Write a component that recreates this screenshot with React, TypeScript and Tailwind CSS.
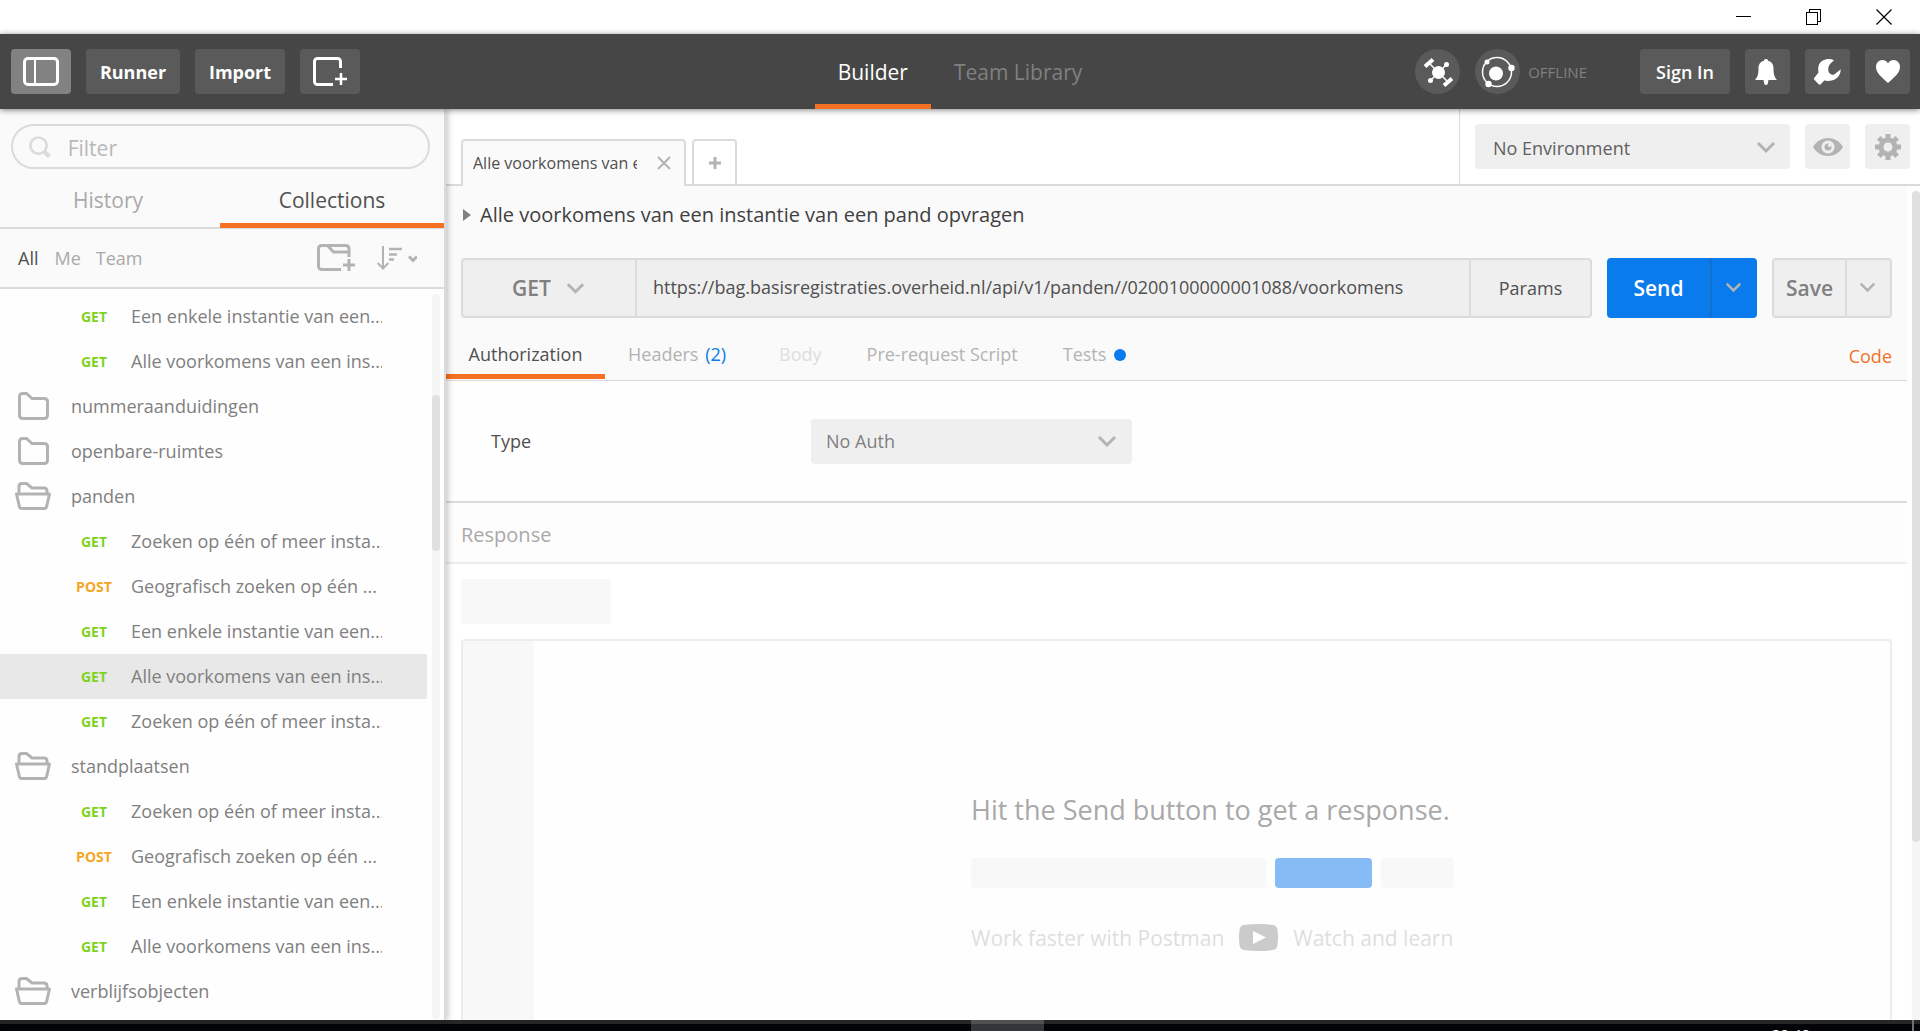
import React from 'react';

type Row =
  | { kind: 'folder'; name: string; open: boolean }
  | { kind: 'request'; method: 'GET' | 'POST'; name: string; active?: boolean };

const rows: Row[] = [
  { kind: 'request', method: 'GET', name: 'Een enkele instantie van een...' },
  { kind: 'request', method: 'GET', name: 'Alle voorkomens van een ins...' },
  { kind: 'folder', name: 'nummeraanduidingen', open: false },
  { kind: 'folder', name: 'openbare-ruimtes', open: false },
  { kind: 'folder', name: 'panden', open: true },
  { kind: 'request', method: 'GET', name: 'Zoeken op één of meer insta...' },
  { kind: 'request', method: 'POST', name: 'Geografisch zoeken op één ...' },
  { kind: 'request', method: 'GET', name: 'Een enkele instantie van een...' },
  { kind: 'request', method: 'GET', name: 'Alle voorkomens van een ins...', active: true },
  { kind: 'request', method: 'GET', name: 'Zoeken op één of meer insta...' },
  { kind: 'folder', name: 'standplaatsen', open: true },
  { kind: 'request', method: 'GET', name: 'Zoeken op één of meer insta...' },
  { kind: 'request', method: 'POST', name: 'Geografisch zoeken op één ...' },
  { kind: 'request', method: 'GET', name: 'Een enkele instantie van een...' },
  { kind: 'request', method: 'GET', name: 'Alle voorkomens van een ins...' },
  { kind: 'folder', name: 'verblijfsobjecten', open: true },
];

function Chevron({ className }: { className: string }) {
  return (
    <svg viewBox="0 0 20 14" fill="none" stroke="currentColor" strokeWidth="3" className={className}>
      <path d="M2 3l8 8 8-8" />
    </svg>
  );
}

function TitleBar() {
  return (
    <div className="flex h-[34px] shrink-0 items-center justify-end gap-[54px] bg-white pr-[28px] text-black">
      <button aria-label="Minimize" className="h-4 w-4">
        <svg viewBox="0 0 16 16" className="h-4 w-4" shapeRendering="crispEdges">
          <path d="M0 7.5h15" stroke="currentColor" />
        </svg>
      </button>
      <button aria-label="Restore" className="h-4 w-4">
        <svg viewBox="0 0 16 16" className="h-4 w-4" fill="none" stroke="currentColor" shapeRendering="crispEdges">
          <path d="M.5 3.5h11v12H.5zM3.500 3.500v-3h11v12h-3" />
        </svg>
      </button>
      <button aria-label="Close" className="h-4 w-4">
        <svg viewBox="0 0 16 16" className="h-4 w-4" stroke="currentColor" strokeWidth="1.2">
          <path d="M.5.5l15 15M15.500.5l-15 15" />
        </svg>
      </button>
    </div>
  );
}

function Header() {
  const btn = 'flex h-[45px] items-center justify-center rounded bg-[#5a5a5a] text-white';
  return (
    <header className="relative z-20 grid h-[75px] shrink-0 grid-cols-[1fr_auto_1fr] bg-[#464646] shadow-[0_1px_6px_rgba(0,0,0,0.5)]">
      <div className="flex items-center gap-[15px] pl-[11px]">
        <button aria-label="Toggle sidebar" className="flex h-[45px] w-[60px] items-center justify-center rounded bg-[#828282] text-white">
          <svg viewBox="0 0 36 29" className="h-[29px] w-[36px]" fill="none" stroke="currentColor">
            <rect x="1.500" y="1.500" width="33" height="26" rx="3.500" strokeWidth="3" />
            <path d="M12 2v25" strokeWidth="2" />
          </svg>
        </button>
        <button className={`${btn} w-[94px] pt-[2px] text-[18px] font-bold`}>Runner</button>
        <button className={`${btn} w-[90px] pt-[2px] text-[18px] font-bold`}>Import</button>
        <button aria-label="New window" className={`${btn} w-[60px]`}>
          <svg viewBox="0 0 34 29" className="h-[29px] w-[34px]" fill="none" stroke="currentColor" strokeWidth="3">
            <path d="M20 27.500H4.500a3 3 0 0 1-3-3v-20a3 3 0 0 1 3-3h20a3 3 0 0 1 3 3V11" />
            <path d="M28 16v12M22 22h12" strokeWidth="2.500" />
          </svg>
        </button>
      </div>
      <nav className="flex text-[21px]">
        <button className="border-b-[5px] border-[#f47023] px-[23px] pt-[7px] font-medium text-white">Builder</button>
        <button className="px-[23px] pt-[2px] text-[#808080]">Team Library</button>
      </nav>
      <div className="flex items-center justify-end gap-[15px] pr-[10px]">
        <button aria-label="Interceptor" className="flex h-[45px] w-[45px] items-center justify-center rounded-full bg-[#5a5a5a] text-white">
          <svg viewBox="0 0 30 30" className="h-[30px] w-[30px]" fill="currentColor" stroke="currentColor">
            <circle cx="15.500" cy="15.500" r="6" />
            <path d="M6 6l19 19M24 7L7 24" strokeWidth="1.500" />
            <circle cx="23.500" cy="7.500" r="2.500" stroke="none" />
            <circle cx="7.500" cy="23.500" r="2.500" stroke="none" />
            <path d="M2 9.500l8-7M21 28.500l8-7" strokeWidth="4" />
          </svg>
        </button>
        <button aria-label="Sync status" className="flex h-[45px] items-center gap-2 text-[15px] text-[#808080]">
          <span className="flex h-[45px] w-[45px] items-center justify-center rounded-full bg-[#5a5a5a] text-white">
            <svg viewBox="0 0 34 34" className="h-[34px] w-[34px]" fill="currentColor">
              <circle cx="16" cy="17" r="14.500" fill="none" stroke="currentColor" strokeWidth="1.500" />
              <circle cx="15" cy="18.500" r="7" />
              <circle cx="6" cy="7" r="2.500" />
              <circle cx="30.500" cy="13" r="3.200" />
              <circle cx="7.500" cy="29" r="3.200" />
            </svg>
          </span>
          <span className="pt-[2px]">OFFLINE</span>
        </button>
        <button className={`${btn} ml-[38px] w-[90px] pt-[2px] text-[18px] font-semibold`}>Sign In</button>
        <button aria-label="Notifications" className={`${btn} w-[45px]`}>
          <svg viewBox="0 0 26 26" className="h-[26px] w-[26px]" fill="currentColor">
            <path d="M11 0c1.500 0 2 .8 2 1.800 4 1 5.500 4 5.500 7.700 0 6 1 8.500 3.500 11.500H13.500l-.8 4a2 2 0 0 1-3.400 0l-.8-4H0c2.500-3 3.500-5.500 3.500-11.500C3.500 5.800 5 2.800 9 1.800 9 .8 9.500 0 11 0z" />
          </svg>
        </button>
        <button aria-label="Settings" className={`${btn} w-[45px]`}>
          <svg viewBox="0 0 27 26" className="h-[26px] w-[27px]" fill="currentColor">
            <path d="M20 1.200C14-1.500 6.500 1 4.700 6.500c-.8 2.500-.5 4.500-.2 7L.6 18.500c-1 1-.6 2 0 2.500l4 4.300c.7.7 1.500.6 2.200 0l3.400-3.800c7 1.600 16-.8 16.600-11.300l-6.600 5.300c-3 1-6-1.500-6-5.300 0-3.500 2-6 5.800-9z" />
          </svg>
        </button>
        <button aria-label="Favorites" className={`${btn} w-[45px]`}>
          <svg viewBox="0 0 24 23" className="h-[23px] w-[24px]" fill="currentColor">
            <path d="M12 23C6 17.500 0 13 0 7 0 3 2.800 0 6.500 0 9 0 11 1.200 12 3.500 13 1.200 15 0 17.500 0 21.200 0 24 3 24 7c0 6-6 10.500-12 16z" />
          </svg>
        </button>
      </div>
    </header>
  );
}

function FolderIcon({ open }: { open: boolean }) {
  return open ? (
    <svg viewBox="0 0 36 28" className="mb-px ml-[15px] h-[28px] w-[36px]" fill="none" stroke="#b3b3b3" strokeWidth="3">
      <path d="M4 12V4.500C4 2.500 5 1.500 7 1.500h4.500L17 6h12c2 0 3 1 3 3v3" />
      <path d="M1.500 12h33l-3 13c-.3 1-.8 1.500-2 1.500h-23c-1.200 0-1.700-.5-2-1.500z" strokeLinejoin="round" />
    </svg>
  ) : (
    <svg viewBox="1 0 36 28" className="mb-px ml-[15px] h-[28px] w-[36px]" fill="none" stroke="#b3b3b3" strokeWidth="3">
      <path d="M5.500 5c0-2.300 1-3.500 3.500-3.500h3.500L18 6.500h12c2.200 0 3.500 1 3.500 3V23c0 2.200-1 3.500-3.500 3.500H9c-2.300 0-3.500-1-3.500-3.500z" />
    </svg>
  );
}

function Sidebar() {
  return (
    <aside className="relative z-10 flex w-[446px] shrink-0 flex-col border-r-2 border-[#dbdbdb] bg-[#fafafa] shadow-[2px_0_6px_rgba(0,0,0,0.22)]">
      <div className="pl-[11px] pr-[14px] pt-[15px]">
        <label className="flex h-[45px] items-center rounded-full border-2 border-[#dbdbdb] pl-[16px]">
          <svg viewBox="0 0 24 24" className="h-6 w-6" fill="none" stroke="#dbdbdb">
            <circle cx="10.500" cy="10.500" r="9" strokeWidth="3" />
            <path d="M17 17l5.500 5.500" strokeWidth="4.500" />
          </svg>
          <input aria-label="Filter" placeholder="Filter" className="ml-[17px] w-full bg-transparent pt-1 text-[21px] outline-none placeholder:text-[#b8b8b8]" />
        </label>
      </div>
      <div className="flex h-[60px] border-b-2 border-[#dbdbdb] text-[21px]">
        <button className="w-[220px] pr-1 pt-[6px] text-[#a9a9a9]">History</button>
        <button className="-mb-px flex-1 border-b-[5px] border-[#f47023] pt-[10px] text-[#505050]">Collections</button>
      </div>
      <div className="flex h-[60px] shrink-0 items-center border-b-2 border-[#dbdbdb] pl-[18px] text-[18px] text-[#a9a9a9]">
        <button className="text-[#505050]">All</button>
        <button className="ml-4">Me</button>
        <button className="ml-[15px]">Team</button>
        <button aria-label="New folder" className="mb-px ml-auto">
          <svg viewBox="0 0 38 27" className="h-[27px] w-[38px]" fill="none" stroke="#b3b3b3" strokeWidth="3">
            <path d="M24 25.500H5c-2.300 0-3.500-1-3.500-3.500V5c0-2.300 1-3.500 3.500-3.500h23.500c2.300 0 3.500 1 3.500 3.500v8" />
            <path d="M11 2l5.500 6H32" />
            <path d="M32 15v12M26 21h12" />
          </svg>
        </button>
        <button aria-label="Sort" className="ml-[22px] mr-[27px]">
          <svg viewBox="0 0 40 24" className="h-[24px] w-[40px]" fill="none" stroke="#b3b3b3" strokeWidth="2">
            <path d="M6 0v22M.7 17L6 22.500 11.300 17" />
            <path d="M12 3h13M12 8.500h8M12 13.500h5" strokeWidth="2.500" />
            <path d="M32 10.500l4 4 4-4" strokeWidth="3" />
          </svg>
        </button>
      </div>
      <div className="flex min-h-0 flex-1 overflow-hidden bg-[#fefefe] pt-[5px]">
        <ul className="w-[427px] text-[18px] text-[#808080]">
          {rows.map((row, i) => (
            <li key={i}>
              {row.kind === 'folder' ? (
                <button className="flex h-[45px] w-full items-center text-left">
                  <FolderIcon open={row.open} />
                  <span className="ml-[20px]">{row.name}</span>
                </button>
              ) : (
                <button className={row.active ? 'flex h-[45px] w-full items-center bg-[#e8e8e8] text-left' : 'flex h-[45px] w-full items-center text-left'}>
                  <span className={row.method === 'GET' ? 'ml-[64px] w-[60px] pb-px text-center text-[14px] font-bold text-[#7ed321]' : 'ml-[64px] w-[60px] pb-px text-center text-[14px] font-bold text-[#f5a623]'}>
                    {row.method}
                  </span>
                  <span className="ml-[7px] w-[251px] overflow-hidden whitespace-nowrap">{row.name}</span>
                </button>
              )}
            </li>
          ))}
        </ul>
        <div className="mb-px ml-[5px] w-2 rounded-full bg-[#f5f5f5] pt-[101px]">
          <div className="h-[156px] rounded-full bg-[#e0e0e0]" />
        </div>
      </div>
    </aside>
  );
}

function TopStrip() {
  return (
    <div className="flex h-[77px] shrink-0 border-b-2 border-[#dbdbdb] bg-white">
      <div className="-mb-[2px] flex flex-1 items-end gap-[6px] pl-[15px]">
        <div className="flex h-[47px] w-[225px] items-center rounded-t border-2 border-b-0 border-[#dbdbdb] bg-[#fafafa] pb-[2px] pl-[10px] text-[16px] text-[#505050]">
          <button className="w-[164px] overflow-hidden whitespace-nowrap text-left">Alle voorkomens van een instantie</button>
          <button aria-label="Close tab" className="ml-5 text-[#b3b3b3]">
            <svg viewBox="0 0 14 14" className="h-[14px] w-[14px]" stroke="currentColor" strokeWidth="2">
              <path d="M1 1l12 12M13 1L1 13" />
            </svg>
          </button>
        </div>
        <button aria-label="New tab" className="flex h-[47px] w-[45px] items-center justify-center rounded-t border-2 border-[#dbdbdb] text-[#b3b3b3]">
          <svg viewBox="0 0 12 12" className="h-3 w-3" stroke="currentColor" strokeWidth="3">
            <path d="M6 0v12M0 6h12" />
          </svg>
        </button>
      </div>
      <div className="flex items-start gap-[15px] border-l border-[#dbdbdb] pl-[15px] pr-[10px] pt-[15px]">
        <div className="relative">
          <select aria-label="Environment" className="h-[45px] w-[315px] appearance-none rounded bg-[#efefef] pl-[18px] pt-1 text-[18px] text-[#606060]">
            <option>No Environment</option>
          </select>
          <Chevron className="pointer-events-none absolute right-[14px] top-4 h-[14px] w-[20px] text-[#b3b3b3]" />
        </div>
        <button aria-label="Quick look" className="flex h-[45px] w-[45px] items-center justify-center rounded bg-[#efefef]">
          <svg viewBox="0 0 30 18" className="h-[18px] w-[30px]">
            <path d="M0 9C7-3 23-3 30 9 23 21 7 21 0 9z" fill="#b3b3b3" />
            <circle cx="15" cy="9" r="6.500" fill="#efefef" />
            <circle cx="15" cy="9" r="3.500" fill="#b3b3b3" />
            <circle cx="16.500" cy="7.300" r="1.600" fill="#efefef" />
          </svg>
        </button>
        <button aria-label="Manage environments" className="flex h-[45px] w-[45px] items-center justify-center rounded bg-[#efefef]">
          <svg viewBox="-13 -13 26 26" className="h-[26px] w-[26px]" fill="none" stroke="#b3b3b3">
            <circle r="7" strokeWidth="5" />
            <path d="M0-13v5M0 13V8M-13 0h5M13 0H8M-9.200-9.200l3.500 3.500M9.200 9.200L5.700 5.700M-9.200 9.200l3.500-3.500M9.200-9.200L5.700-5.700" strokeWidth="5" />
          </svg>
        </button>
      </div>
    </div>
  );
}

function RequestBar() {
  return (
    <div className="flex h-[60px] gap-[15px] text-[18px]">
      <div className="flex min-w-0 flex-1 rounded border-2 border-[#dbdbdb] bg-[#efefef]">
        <div className="relative w-[174px] shrink-0 border-r-2 border-[#dbdbdb]">
          <select aria-label="Method" className="h-full w-full appearance-none pl-[49px] pt-[2px] text-[21px] font-semibold text-[#808080]">
            <option>GET</option>
          </select>
          <Chevron className="pointer-events-none absolute right-[50px] top-[21px] h-[14px] w-[19px] text-[#b3b3b3]" />
        </div>
        <input aria-label="Request URL" className="min-w-0 flex-1 bg-transparent pb-[2px] pl-[16px] text-[#505050] outline-none" defaultValue="https://bag.basisregistraties.overheid.nl/api/v1/panden//0200100000001088/voorkomens" />
        <button className="w-[121px] border-l-2 border-[#dbdbdb] text-[#505050]">Params</button>
      </div>
      <div className="flex w-[150px] rounded bg-[#097bed] text-white">
        <button className="flex-1 pt-[2px] text-[21px] font-semibold">Send</button>
        <button aria-label="Send options" className="flex w-[47px] items-center justify-center border-l-2 border-[#1470cc] pr-[2px]">
          <Chevron className="mb-[2px] h-[12px] w-[17px] text-[#b3b3b3]" />
        </button>
      </div>
      <div className="flex w-[120px] rounded border-2 border-[#dbdbdb] bg-[#efefef] text-[#808080]">
        <button className="flex-1 pt-[2px] text-[21px] font-semibold">Save</button>
        <button aria-label="Save options" className="flex w-[45px] items-center justify-center border-l-2 border-[#dbdbdb] pr-[2px]">
          <Chevron className="mb-[2px] h-[12px] w-[17px] text-[#b3b3b3]" />
        </button>
      </div>
    </div>
  );
}

function Builder() {
  return (
    <div className="flex min-h-0 flex-1 overflow-hidden">
      <div className="flex min-w-0 flex-1 flex-col">
        <section className="shrink-0 border-b border-[#dbdbdb] bg-[#fafafa]">
          <div className="px-[15px]">
            <h1 className="h-[72px] pt-[14px] text-[20px] font-medium leading-[30px] text-[#404040]">
              <button className="flex items-center">
                <svg viewBox="0 0 8 12" className="ml-[2px] mr-[9px] h-3 w-2" fill="#808080">
                  <path d="M0 0l8 6-8 6z" />
                </svg>
                Alle voorkomens van een instantie van een pand opvragen
              </button>
            </h1>
            <RequestBar />
          </div>
          <div className="flex h-[62px] pb-px pr-[15px] text-[18px] text-[#b3b3b3]">
            <button className="w-[159px] border-b-[5px] border-[#f47023] pt-[17px] text-[#505050]">Authorization</button>
            <button className="ml-[23px] pt-3">
              Headers <span className="ml-[2px] text-[#097bed]">(2)</span>
            </button>
            <button className="ml-[53px] pt-3 text-[#dedede]">Body</button>
            <button className="ml-[45px] pt-3">Pre-request Script</button>
            <button className="ml-[45px] flex items-center pt-3">
              Tests
              <span className="ml-2 h-3 w-3 rounded-full bg-[#097bed]" />
            </button>
            <a href="#code" className="ml-auto flex items-center pt-4 text-[#f47023]">
              Code
            </a>
          </div>
        </section>
        <section className="flex h-[122px] shrink-0 items-center border-b-2 border-[#dbdbdb] bg-[#fefefe] pl-[45px]">
          <label htmlFor="auth-type" className="w-[320px] text-[18px] text-[#505050]">
            Type
          </label>
          <div className="relative">
            <select id="auth-type" className="h-[45px] w-[321px] appearance-none rounded bg-[#efefef] pl-[15px] text-[18px] text-[#808080]">
              <option>No Auth</option>
            </select>
            <Chevron className="pointer-events-none absolute right-[15px] top-[15px] h-[14px] w-[20px] text-[#b3b3b3]" />
          </div>
        </section>
        <h2 className="flex h-[61px] shrink-0 items-center border-b-2 border-[#ededed] bg-[#fdfdfd] pl-[15px] pt-[5px] text-[20px] text-[#a9a9a9]">Response</h2>
        <div className="flex min-h-0 flex-1 flex-col bg-white px-[15px] pt-[15px]">
          <div className="h-[45px] w-[150px] shrink-0 rounded bg-[#f8f8f8]" />
          <div className="mt-[15px] flex flex-1 rounded-t border-2 border-b-0 border-[#ededed] bg-[#fefefe]">
            <div className="w-[71px] shrink-0 bg-[#f8f8f8]" />
            <div className="flex flex-1 flex-col items-center pl-px pt-[147px]">
              <div>
                <p className="text-[27px] leading-[44px] text-[#a9a9a9]">Hit the Send button to get a response.</p>
                <div className="mt-[26px] flex h-[30px] gap-[9px]">
                  <div className="w-[295px] rounded bg-[#f8f8f8]" />
                  <div className="w-[97px] rounded bg-[#85bcf6]" />
                  <div className="w-[73px] rounded bg-[#f8f8f8]" />
                </div>
                <div className="mt-[34px] flex h-8 items-center text-[21px] text-[#dedede]">
                  <span className="pt-[2px]">Work faster with Postman</span>
                  <a href="#watch" className="flex items-center">
                    <svg viewBox="0 0 39 27" className="mx-[15px] mb-px h-[27px] w-[39px]">
                      <path d="M5 1Q19.500-1 34 1q4 .5 4.500 5 1 7.500 0 15-.5 4.500-4.500 5-14.500 2-29 0-4-.5-4.500-5-1-7.500 0-15Q1 1.500 5 1z" fill="#cbcbcb" />
                      <path d="M14 7l13 6.500L14 20z" fill="#fff" />
                    </svg>
                    <span className="pt-[2px]">Watch and learn</span>
                  </a>
                </div>
              </div>
            </div>
          </div>
        </div>
      </div>
      <div className="w-[13px] bg-[#fefefe] pl-[5px] pt-[5px]">
        <div className="h-full rounded-t-full bg-[#f5f5f5]">
          <div className="h-[651px] rounded-full bg-[#e0e0e0]" />
        </div>
      </div>
    </div>
  );
}

function Taskbar() {
  return (
    <footer className="flex h-[11px] shrink-0 items-start overflow-hidden bg-[linear-gradient(#262626_4px,#020408_4px)]">
      <div className="ml-[971px] h-[11px] w-[73px] bg-[linear-gradient(#505050_4px,#33373b_4px)]" />
      <time className="ml-auto mr-[102px] pt-1 text-[15px] leading-5 text-white">20:49</time>
      <div className="mr-[6px] h-[11px] w-[2px] bg-[#707070]" />
    </footer>
  );
}

export default function App() {
  return (
    <div className="flex h-screen flex-col overflow-hidden bg-white font-['Open_Sans',sans-serif]">
      <TitleBar />
      <Header />
      <div className="flex min-h-0 flex-1">
        <Sidebar />
        <main className="flex min-w-0 flex-1 flex-col">
          <TopStrip />
          <Builder />
        </main>
      </div>
      <Taskbar />
    </div>
  );
}
